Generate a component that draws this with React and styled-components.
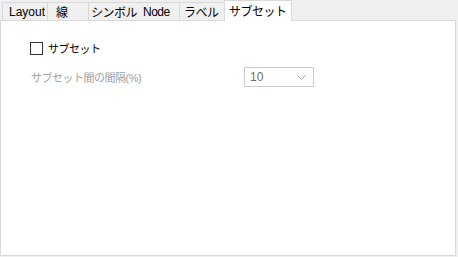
import React from 'react';
import styled, { createGlobalStyle } from 'styled-components';

const GlobalStyle = createGlobalStyle`
  html, body {
    margin: 0;
    background: #f0f0f0;
  }
  body {
    font-family: "Liberation Sans", "Noto Sans CJK JP", sans-serif;
    font-size: 12px;
    color: #000;
  }
`;

const Window = styled.div`
  width: 458px;
  height: 257px;
  box-sizing: border-box;
  padding: 0 2px 1px 0;
  display: flex;
  flex-direction: column;
`;

const TabBar = styled.div`
  display: flex;
  align-items: flex-end;
  height: 20px;
  padding-left: 2px;
  position: relative;
  z-index: 1;
`;

const Tab = styled.div`
  box-sizing: border-box;
  width: ${p => p.$w}px;
  height: ${p => (p.$active ? 21 : 18)}px;
  margin-left: -1px;
  margin-bottom: ${p => (p.$active ? -1 : 0)}px;
  border: 1px solid #d9d9d9;
  border-bottom: none;
  background: ${p => (p.$active ? '#ffffff' : '#f0f0f0')};
  display: flex;
  align-items: center;
  gap: 6px;
  padding-left: ${p => p.$pad}px;
  padding-bottom: ${p => (p.$active ? 2 : 0)}px;
  white-space: nowrap;
  letter-spacing: ${p => (p.$cjk ? -0.5 : 0)}px;
  &:first-child {
    margin-left: 0;
  }
`;

const Panel = styled.div`
  flex: 1;
  background: #fff;
  border: 1px solid #d9d9d9;
  padding: 19px 0 0 29px;
  display: flex;
  flex-direction: column;
  gap: 11px;
`;

const CheckRow = styled.label`
  display: flex;
  align-items: center;
  height: 16px;
  gap: 5px;
  font-size: 11px;
  letter-spacing: -0.5px;
`;

const Box = styled.span`
  box-sizing: border-box;
  width: 13px;
  height: 13px;
  border: 1px solid #333;
  background: #fff;
`;

const FieldRow = styled.div`
  display: grid;
  grid-template-columns: 214px 70px;
  align-items: center;
  height: 20px;
`;

const FieldLabel = styled.span`
  color: #a0a0a0;
  font-size: 11px;
  letter-spacing: -0.5px;
  padding-left: 1px;
`;

const Select = styled.div`
  box-sizing: border-box;
  height: 20px;
  border: 1px solid #cccccc;
  display: flex;
  align-items: center;
  justify-content: space-between;
  padding: 0 7px 0 5px;
  color: #6d6d6d;
`;

const tabs = [
  { label: ['Layout'], w: 46, pad: 6 },
  { label: ['線'], w: 42, pad: 8, cjk: true },
  { label: ['シンボル', 'Node'], w: 92, pad: 2, cjk: true },
  { label: ['ラベル'], w: 46, pad: 4, cjk: true },
  { label: ['サブセット'], w: 68, pad: 4, cjk: true, active: true },
];

export default function App() {
  return (
    <>
      <GlobalStyle />
      <Window>
        <TabBar>
          {tabs.map((t, i) => (
            <Tab key={i} $w={t.w} $pad={t.pad} $active={t.active} $cjk={t.cjk}>
              {t.label.map(s => (
                <span key={s}>{s}</span>
              ))}
            </Tab>
          ))}
        </TabBar>
        <Panel>
          <CheckRow>
            <Box />
            サブセット
          </CheckRow>
          <FieldRow>
            <FieldLabel>サブセット間の間隔(%)</FieldLabel>
            <Select>
              <span>10</span>
              <svg width="9" height="5" viewBox="0 0 9 5">
                <path d="M0.5 0.5 L4.5 4.5 L8.5 0.5" fill="none" stroke="#a8a8a8" strokeWidth="1" />
              </svg>
            </Select>
          </FieldRow>
        </Panel>
      </Window>
    </>
  );
}
